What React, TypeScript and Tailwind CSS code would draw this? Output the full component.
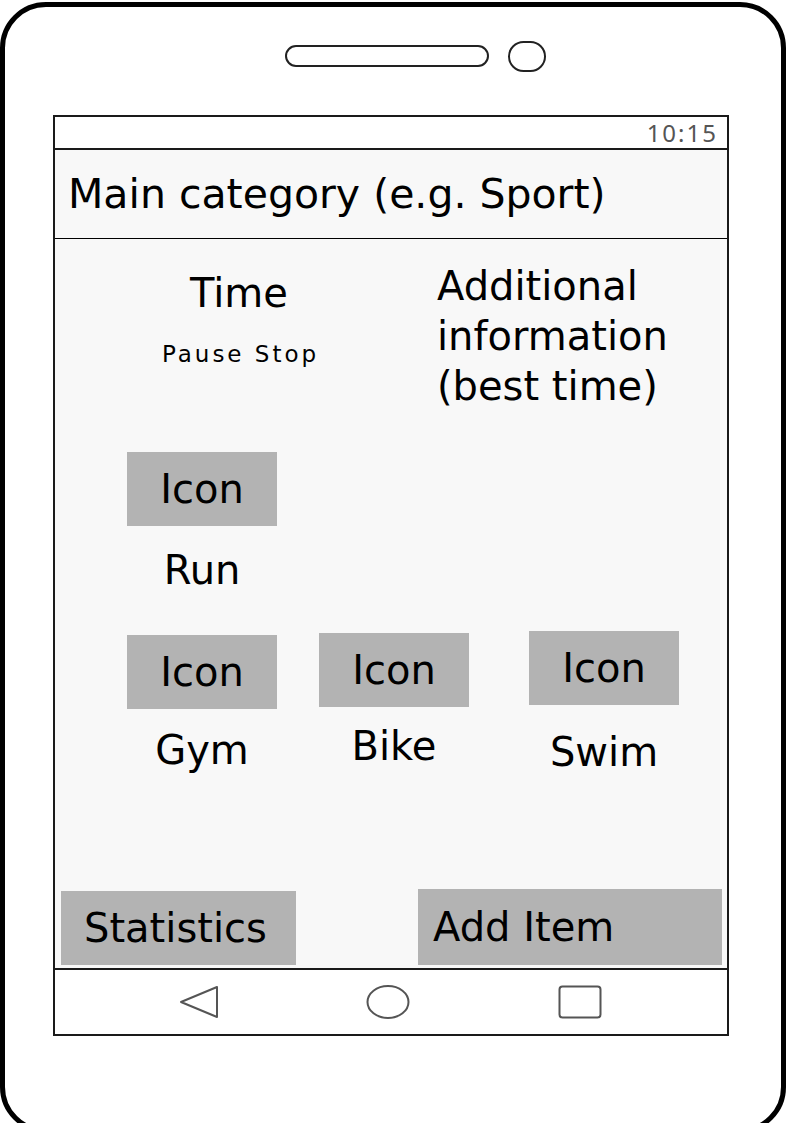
const items = {
  run: { label: "Run" },
};

function Tile({ label, gap, className = "" }: { label: string; gap: string; className?: string }) {
  return (
    <div className={`flex flex-col items-center w-[150px] ${className}`}>
      <div className="w-[150px] h-[74px] bg-[#b3b3b3] flex items-center justify-center text-[40px] leading-none">
        Icon
      </div>
      <div className={`${gap} text-[40px] leading-[48px]`}>{label}</div>
    </div>
  );
}

function NavBar() {
  return (
    <div className="h-[66px] border-t-2 border-[#1a1a1a] bg-white flex items-center">
      <svg className="ml-[124px]" width="40" height="34" viewBox="0 0 40 34">
        <polygon points="38,2 38,32 2,17" fill="none" stroke="#555" strokeWidth="2" strokeLinejoin="round" />
      </svg>
      <svg className="ml-[147px]" width="44" height="36" viewBox="0 0 44 36">
        <ellipse cx="22" cy="18" rx="20.5" ry="16" fill="none" stroke="#555" strokeWidth="2" />
      </svg>
      <svg className="ml-[148px]" width="44" height="34" viewBox="0 0 44 34">
        <rect x="1.5" y="1.5" width="41" height="31" rx="3" fill="none" stroke="#555" strokeWidth="2" />
      </svg>
    </div>
  );
}

export default function App() {
  return (
    <div className="w-[794px] h-[1123px] bg-white overflow-hidden font-['DejaVu_Sans',sans-serif] text-black">
      {/* phone body, runs just past the bottom edge */}
      <div className="mt-[2px] w-[786px] h-[1131px] shrink-0 rounded-[46px] border-[5px] border-black">
        {/* speaker + camera */}
        <div className="mt-[33px] ml-[280px] h-[32px] flex items-center gap-[19px]">
          <div className="w-[204px] h-[22px] rounded-full border-[2.5px] border-[#222]" />
          <div className="w-[38px] h-[31px] rounded-full border-[2px] border-[#222]" />
        </div>

        {/* screen */}
        <div className="mt-[43px] ml-[48px] w-[676px] h-[921px] border-2 border-[#1a1a1a] bg-white flex flex-col">
          <div className="h-[33px] border-b-2 border-[#1a1a1a] flex items-center justify-end pr-[9px]">
            <span className="font-['Noto_Sans',sans-serif] text-[24px] leading-none tracking-[2px] text-[#555]">10:15</span>
          </div>

          <div className="h-[89px] border-b border-black bg-[#f8f8f8] flex items-center pl-[13px]">
            <span className="text-[41px] leading-[48px] whitespace-nowrap">Main category (e.g. Sport)</span>
          </div>

          <div className="flex-1 bg-[#f8f8f8] flex flex-col">
            <div className="flex pt-[22px]">
              <div className="ml-[64px] w-[240px] pt-[8px] flex flex-col items-center">
                <div className="text-[40px] leading-[48px]">Time</div>
                <div className="mt-[24px] text-[23px] leading-[26px] tracking-[3px] pl-[3px]">Pause Stop</div>
              </div>
              <div className="ml-[78px] text-[40px] leading-[50px] whitespace-nowrap">
                Additional
                <br />
                information
                <br />
                (best time)
              </div>
            </div>

            <Tile label={items.run.label} gap="mt-[20px]" className="mt-[41px] ml-[72px]" />

            <div className="mt-[37px] flex items-start">
              <Tile label="Gym" gap="mt-[17px]" className="ml-[72px] mt-[4px]" />
              <Tile label="Bike" gap="mt-[15px]" className="ml-[42px] mt-[2px]" />
              <Tile label="Swim" gap="mt-[23px]" className="ml-[60px]" />
            </div>

            <div className="flex-1" />

            <div className="flex items-end justify-between pb-[3px]">
              <div className="ml-[6px] w-[235px] h-[74px] bg-[#b3b3b3] flex items-center pl-[23px] text-[40px] leading-none">
                Statistics
              </div>
              <div className="mr-[5px] w-[304px] h-[76px] bg-[#b3b3b3] flex items-center pl-[15px] text-[40px] leading-none">
                Add Item
              </div>
            </div>
          </div>

          <NavBar />
        </div>
      </div>
    </div>
  );
}
